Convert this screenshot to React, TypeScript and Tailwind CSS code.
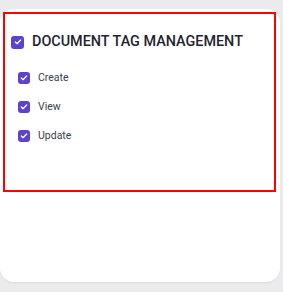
import { Check } from 'lucide-react';

const PERMISSIONS = ['Create', 'View', 'Update'];

function Checkbox({ size }: { size: 'lg' | 'sm' }) {
  return (
    <span
      className={
        size === 'lg'
          ? 'flex size-[13px] shrink-0 items-center justify-center rounded-[3px] bg-[#5b43cf]'
          : 'flex size-[12px] shrink-0 items-center justify-center rounded-[3px] bg-[#5b43cf]'
      }
    >
      <Check className="size-[8px] text-white" strokeWidth={4} />
    </span>
  );
}

export default function App() {
  return (
    <div className="min-h-[292px] w-[283px] bg-[#ebebed] pt-[9px] font-['Roboto',sans-serif]">
      <div className="h-[273px] w-[280px] rounded-[14px] bg-white pt-[3px] pl-[3px] shadow-[0_1px_2px_rgba(0,0,0,0.06)]">
        <div className="h-[180px] w-[273px] border-[2.5px] border-[#ff0000] pt-[21px] pl-[6px]">
          <div className="flex items-center gap-[8px]">
            <Checkbox size="lg" />
            <h2 className="text-[14.4px] font-medium leading-none text-[#1f2430]">
              DOCUMENT TAG MANAGEMENT
            </h2>
          </div>
          <ul className="mt-[22px] flex flex-col gap-[16px] pl-[7px]">
            {PERMISSIONS.map((p) => (
              <li key={p} className="flex items-center gap-[8px]">
                <Checkbox size="sm" />
                <span className="text-[10.5px] leading-[13px] text-[#3a3f4b]">{p}</span>
              </li>
            ))}
          </ul>
        </div>
      </div>
    </div>
  );
}
